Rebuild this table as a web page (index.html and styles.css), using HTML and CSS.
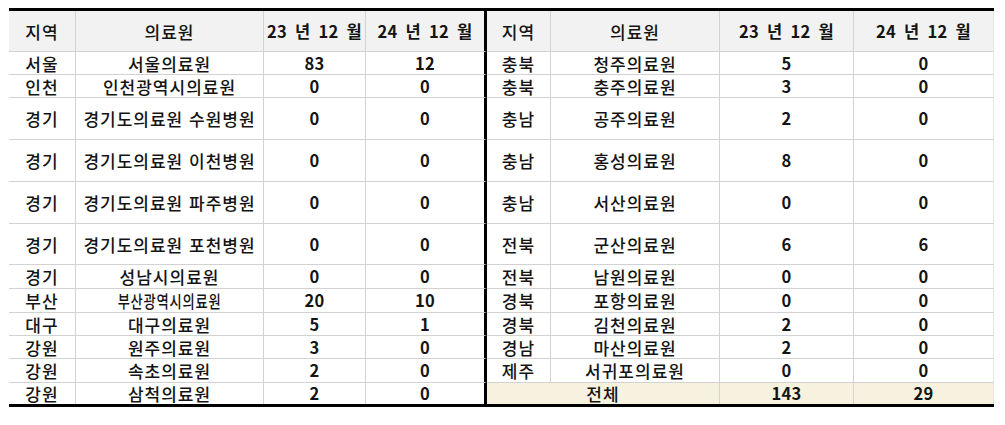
FILE: index.html
```html
<!DOCTYPE html>
<html lang="ko">
<head>
<meta charset="utf-8">
<link rel="stylesheet" href="styles.css">
</head>
<body>
<div class="wrap">
  <div class="sheet">
    <div class="c hd">지역</div>
    <div class="c hd">의료원</div>
    <div class="c hd b date">23 년 12 월</div>
    <div class="c hd b date div">24 년 12 월</div>
    <div class="c hd">지역</div>
    <div class="c hd">의료원</div>
    <div class="c hd b date">23 년 12 월</div>
    <div class="c hd b date last">24 년 12 월</div>

    <div class="c">서울</div><div class="c">서울의료원</div><div class="c b">83</div><div class="c b div">12</div>
    <div class="c">충북</div><div class="c">청주의료원</div><div class="c b">5</div><div class="c b last">0</div>

    <div class="c">인천</div><div class="c">인천광역시의료원</div><div class="c b">0</div><div class="c b div">0</div>
    <div class="c">충북</div><div class="c">충주의료원</div><div class="c b">3</div><div class="c b last">0</div>

    <div class="c">경기</div><div class="c">경기도의료원 수원병원</div><div class="c b">0</div><div class="c b div">0</div>
    <div class="c">충남</div><div class="c">공주의료원</div><div class="c b">2</div><div class="c b last">0</div>

    <div class="c">경기</div><div class="c">경기도의료원 이천병원</div><div class="c b">0</div><div class="c b div">0</div>
    <div class="c">충남</div><div class="c">홍성의료원</div><div class="c b">8</div><div class="c b last">0</div>

    <div class="c">경기</div><div class="c">경기도의료원 파주병원</div><div class="c b">0</div><div class="c b div">0</div>
    <div class="c">충남</div><div class="c">서산의료원</div><div class="c b">0</div><div class="c b last">0</div>

    <div class="c">경기</div><div class="c">경기도의료원 포천병원</div><div class="c b">0</div><div class="c b div">0</div>
    <div class="c">전북</div><div class="c">군산의료원</div><div class="c b">6</div><div class="c b last">6</div>

    <div class="c">경기</div><div class="c">성남시의료원</div><div class="c b">0</div><div class="c b div">0</div>
    <div class="c">전북</div><div class="c">남원의료원</div><div class="c b">0</div><div class="c b last">0</div>

    <div class="c">부산</div><div class="c"><span class="squeeze">부산광역시의료원</span></div><div class="c b">20</div><div class="c b div">10</div>
    <div class="c">경북</div><div class="c">포항의료원</div><div class="c b">0</div><div class="c b last">0</div>

    <div class="c">대구</div><div class="c">대구의료원</div><div class="c b">5</div><div class="c b div">1</div>
    <div class="c">경북</div><div class="c">김천의료원</div><div class="c b">2</div><div class="c b last">0</div>

    <div class="c">강원</div><div class="c">원주의료원</div><div class="c b">3</div><div class="c b div">0</div>
    <div class="c">경남</div><div class="c">마산의료원</div><div class="c b">2</div><div class="c b last">0</div>

    <div class="c">강원</div><div class="c">속초의료원</div><div class="c b">2</div><div class="c b div">0</div>
    <div class="c">제주</div><div class="c">서귀포의료원</div><div class="c b">0</div><div class="c b last">0</div>

    <div class="c end">강원</div><div class="c end">삼척의료원</div><div class="c b end">2</div><div class="c b div end">0</div>
    <div class="c end tot span2">전체</div><div class="c b end tot">143</div><div class="c b end tot last">29</div>
  </div>
</div>
</body>
</html>
```

FILE: styles.css
```css
* { box-sizing: border-box; }
html, body { margin: 0; padding: 0; background: #ffffff; }
body {
  font-family: "Noto Sans CJK KR", "Noto Sans", sans-serif;
  color: #141414;
}
.wrap {
  padding: 8px 0 0 9px;
}
.sheet {
  width: 985px;
  display: grid;
  grid-template-columns: 67px 188px 102px 121px 64px 169px 134px 140px;
  grid-template-rows: 41px 23px 23px 42px 42px 42px 41px 24px 24px 23px 23px 24px 21px;
  border-top: 3px solid #000;
  border-bottom: 3px solid #000;
}
.c {
  display: flex;
  align-items: center;
  justify-content: center;
  border-right: 1px solid #d2d2d2;
  border-bottom: 1px solid #d2d2d2;
  font-size: 17px;
  font-weight: 500;
  letter-spacing: 1px;
  line-height: 1;
  white-space: nowrap;
  background: #fff;
}
.hd { background: #f2f2f2; }
.b { font-size: 16.5px; font-weight: 700; letter-spacing: 0.3px; }
.date { word-spacing: 3px; }
.div { border-right: 3px solid #000; }
.last { border-right: 1px solid #e6e6e6; }
.end { border-bottom: none; }
.tot { background: #f7f2df; }
.span2 { grid-column: span 2; }
.squeeze {
  display: inline-block;
  transform: scaleX(0.78);
}
```
